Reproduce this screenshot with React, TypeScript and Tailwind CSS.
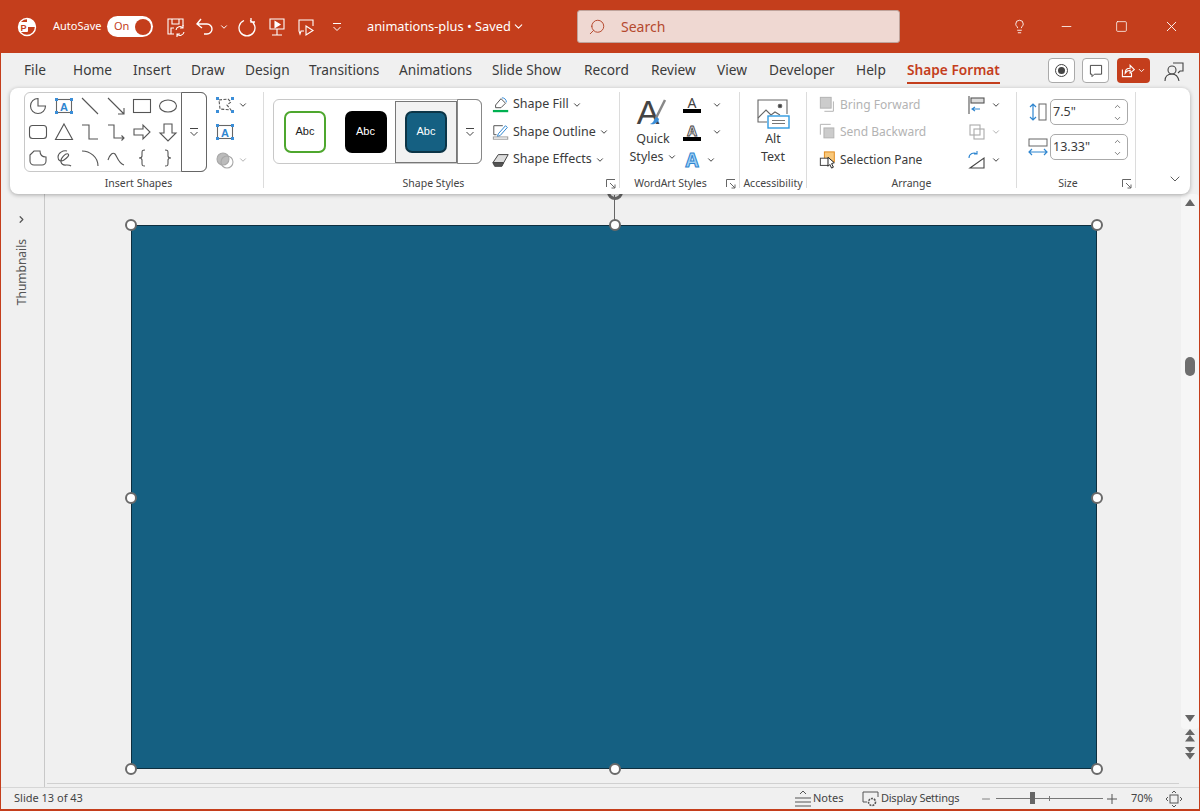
import type { ReactNode } from 'react';
import { ChevronDown, ChevronUp, ChevronRight, Search, Lightbulb, Minus, Square, X } from 'lucide-react';

const Ico = ({ size = 20, children, className = '' }: { size?: number; children: ReactNode; className?: string }) => (
  <svg width={size} height={size} viewBox="0 0 20 20" fill="none" stroke="#555" strokeWidth="1.1" className={`shrink-0 ${className}`}>
    {children}
  </svg>
);

const Chev = ({ className = '' }: { className?: string }) => (
  <ChevronDown size={10} strokeWidth={2.4} className={`shrink-0 text-[#444] ${className}`} />
);

const Handle = ({ className }: { className: string }) => (
  <div className={`absolute h-[12px] w-[12px] rounded-full border-2 border-[#6a6a6a] bg-white ${className}`} />
);

const Launcher = ({ className = '' }: { className?: string }) => (
  <svg width="10" height="10" viewBox="0 0 10 10" fill="none" stroke="#666" className={`absolute -bottom-[1px] ${className}`}>
    <path d="M.5 8V.5H9M4 4l5 5M9 5.5V9H5.5" />
  </svg>
);

const MoreGlyph = () => (
  <svg width="10" height="10" viewBox="0 0 10 10" fill="none" stroke="#444">
    <path d="M1 1.5h8M1.5 5L5 8.5 8.5 5" />
  </svg>
);

const BlueDots = () => (
  <g fill="#3b8ed8" stroke="none">
    <rect x="1" y="2" width="3" height="3" />
    <rect x="16" y="2" width="3" height="3" />
    <rect x="1" y="15" width="3" height="3" />
    <rect x="16" y="15" width="3" height="3" />
  </g>
);

const TextBoxIcon = () => (
  <Ico>
    <rect x="2.5" y="3.5" width="15" height="13" stroke="#666" />
    <BlueDots />
    <text x="10" y="14.5" textAnchor="middle" fontSize="11" fontWeight="700" fill="#2f86d0" stroke="none" fontFamily="Liberation Sans">A</text>
  </Ico>
);

const shapes: ReactNode[] = [
  <path d="M10 2.5a7.5 7.5 0 1 0 7.5 7.5H10z" />,
  <TextBoxIcon />,
  <path d="M2 2l16 16" />,
  <path d="M2 2l16 16M18 12v6h-6" />,
  <rect x="1.5" y="3.5" width="17" height="13" />,
  <ellipse cx="10" cy="10" rx="8.5" ry="6" />,
  <rect x="1.5" y="3.5" width="17" height="13" rx="3" />,
  <path d="M10 2l8.5 15.5h-17z" />,
  <path d="M2 3h7v14h9" />,
  <path d="M2 3h6v13h10M15.5 13.5l2.5 2.5-2.5 2.5" />,
  <path d="M2 7h9V3l7 7-7 7v-4H2z" />,
  <path d="M6 2h8v9h4l-8 8-8-8h4z" />,
  <path d="M2 7l4-4h6c0 4 2 6 6 6v4a4 4 0 0 1-4 4H6a4 4 0 0 1-4-4z" />,
  <path d="M13 3C9 2 4 5 4 9s3 5 6 3 6-5 4-6-8 4-7 8 4 3 6 3 3 0 4 1" />,
  <path d="M2 3c8 0 16 6 16 15" />,
  <path d="M2 12c2-6 5-8 7-6s3 9 9 11" />,
  <path d="M13 2c-3 0-3 1-3 3v3c0 1-1 2-3 2 2 0 3 1 3 2v3c0 2 0 3 3 3" />,
  <path d="M7 2c3 0 3 1 3 3v3c0 1 1 2 3 2-2 0-3 1-3 2v3c0 2 0 3-3 3" />,
];

const tabs = [
  { label: 'File', w: 'w-[49px]' },
  { label: 'Home', w: 'w-[60px]' },
  { label: 'Insert', w: 'w-[58px]' },
  { label: 'Draw', w: 'w-[54px]' },
  { label: 'Design', w: 'w-[64px]' },
  { label: 'Transitions', w: 'w-[90px]' },
  { label: 'Animations', w: 'w-[93px]' },
  { label: 'Slide Show', w: 'w-[92px]' },
  { label: 'Record', w: 'w-[67px]' },
  { label: 'Review', w: 'w-[66px]' },
  { label: 'View', w: 'w-[52px]' },
  { label: 'Developer', w: 'w-[87px]' },
  { label: 'Help', w: 'w-[51px]' },
];

function TitleBar() {
  return (
    <div className="flex h-[53px] shrink-0 items-center text-white">
      <svg width="22" height="22" viewBox="0 0 22 22" className="ml-[15px] shrink-0">
        <circle cx="11" cy="11" r="8.5" fill="none" stroke="#fff" strokeWidth="1.4" />
        <path d="M11 2.5a8.5 8.5 0 0 1 8.5 8.5H11z" fill="#fff" />
        <rect x="3" y="6" width="9" height="10" rx="1" fill="#fff" />
        <text x="7.5" y="14.5" textAnchor="middle" fontSize="9" fontWeight="700" fill="#c43e1c" fontFamily="Liberation Sans">P</text>
      </svg>
      <span className="ml-[15px] w-[54px] text-[11px]">AutoSave</span>
      <div className="flex h-[21px] w-[46px] items-center justify-between rounded-full bg-white pl-[7px] pr-[2px] text-[11px] text-[#c43e1c]">
        <span>On</span>
        <div className="h-[16px] w-[16px] rounded-full bg-[#c43e1c]" />
      </div>
      <svg width="20" height="20" viewBox="0 0 20 20" fill="none" stroke="#fff" strokeWidth="1.1" className="ml-[13px] shrink-0">
        <path d="M8 17H2V2h15v7M6 2v5h7V2M5 17v-6h3" />
        <path d="M10 13a4 4 0 0 1 7-2M18 15a4 4 0 0 1-7 2M17 8v3h-3M11 20v-3h3" />
      </svg>
      <svg width="20" height="20" viewBox="0 0 20 20" fill="none" stroke="#fff" strokeWidth="1.4" className="ml-[9px] shrink-0">
        <path d="M2 7h10a5 5 0 0 1 0 10H9M6 2L2 7l5 4" />
      </svg>
      <ChevronDown size={10} strokeWidth={2.4} className="ml-[4px] shrink-0 text-white" />
      <svg width="20" height="20" viewBox="0 0 20 20" fill="none" stroke="#fff" strokeWidth="1.3" className="ml-[8px] shrink-0">
        <path d="M7 3.5a8 8 0 1 0 6 0M6 1v4H2" transform="matrix(-1 0 0 1 20 0)" />
      </svg>
      <svg width="20" height="20" viewBox="0 0 20 20" fill="none" stroke="#fff" strokeWidth="1.1" className="ml-[10px] shrink-0">
        <path d="M3 2h14v10H3zM10 12v6M5 18h10" />
        <path d="M8 4.5l5 3-5 3z" fill="#fff" />
      </svg>
      <svg width="20" height="20" viewBox="0 0 20 20" fill="none" stroke="#fff" strokeWidth="1.1" className="ml-[9px] shrink-0">
        <path d="M8 14H5l-1 3-1-3V3h14v6" />
        <path d="M10 9l7 4.5-7 4.5z" />
      </svg>
      <svg width="10" height="10" viewBox="0 0 10 10" fill="none" stroke="#fff" className="ml-[16px] shrink-0">
        <path d="M1 1.5h8M1.5 5L5 8.5 8.5 5" />
      </svg>
      <span className="ml-[25px] w-[143px] whitespace-nowrap text-[12.8px]">animations-plus • Saved</span>
      <ChevronDown size={13} className="ml-[2px] shrink-0" />
      <div className="ml-[52px] flex h-[33px] w-[323px] shrink-0 items-center rounded-[3px] border border-[#bfa39b] bg-[#efd8d2] text-[14px] text-[#b5492e]">
        <Search size={18} strokeWidth={1.3} className="ml-[10px] -scale-x-100" />
        <span className="ml-[15px]">Search</span>
      </div>
      <Lightbulb size={15} strokeWidth={1.4} className="ml-[112px]" />
      <Minus size={15} strokeWidth={1.3} className="ml-[32px]" />
      <Square size={13} strokeWidth={1.4} className="ml-[41px]" />
      <X size={17} strokeWidth={1.3} className="ml-[35px]" />
    </div>
  );
}

function Tabs() {
  return (
    <div className="flex h-[35px] shrink-0 items-center pl-[23px] text-[13.7px] text-[#3b3b3b]">
      {tabs.map(t => (
        <span key={t.label} className={`${t.w} whitespace-nowrap`}>{t.label}</span>
      ))}
      <span className="relative whitespace-nowrap font-semibold text-[#c43e1c]">
        Shape Format
        <span className="absolute -bottom-[3px] left-0 right-0 h-[2px] bg-[#c43e1c]" />
      </span>
      <div className="ml-auto mr-[14px] flex items-center gap-[7px]">
        <div className="flex h-[25px] w-[27px] items-center justify-center rounded-[4px] border border-[#aaa] bg-white">
          <div className="flex h-[13px] w-[13px] items-center justify-center rounded-full border border-[#444]">
            <div className="h-[7px] w-[7px] rounded-full bg-[#444]" />
          </div>
        </div>
        <div className="flex h-[25px] w-[27px] items-center justify-center rounded-[4px] border border-[#aaa] bg-white">
          <Ico size={16}><path d="M3 3h14v11H8l-3 3v-3H3z" stroke="#333" /></Ico>
        </div>
        <div className="ml-[1px] flex h-[25px] w-[33px] items-center justify-center gap-[2px] rounded-[4px] bg-[#c43e1c]">
          <svg width="14" height="14" viewBox="0 0 20 20" fill="none" stroke="#fff" strokeWidth="1.6">
            <path d="M2 8v10h13v-5M6 13c0-5 3-7 7-7V2l6 6-6 5V9c-3 0-5 1-7 4z" />
          </svg>
          <ChevronDown size={9} strokeWidth={2.4} className="text-white" />
        </div>
        <svg width="22" height="22" viewBox="0 0 22 22" fill="none" stroke="#444" strokeWidth="1.1" className="ml-[6px]">
          <circle cx="9" cy="10" r="4" />
          <path d="M2 21c0-5 3-7 7-7s6 2 7 7M10 3h10v8h-3l-2 2" />
        </svg>
      </div>
    </div>
  );
}

const Group = ({ w, label, children, launcher, labelPad = '' }: { w: string; label: string; children: ReactNode; launcher?: string; labelPad?: string }) => (
  <div className={`relative mb-[6px] mt-[4px] flex shrink-0 flex-col border-r border-[#dcdcdc] ${w}`}>
    <div className="flex flex-1">{children}</div>
    <div className={`-mb-[4px] h-[16px] whitespace-nowrap text-center text-[10.5px] leading-[14px] text-[#444] ${labelPad}`}>{label}</div>
    {launcher && <Launcher className={launcher} />}
  </div>
);

const CmdRow = ({ icon, label, chev = true, off = false, small = false }: { icon: ReactNode; label: string; chev?: boolean; off?: boolean; small?: boolean }) => (
  <div className={`flex h-[27.5px] items-center whitespace-nowrap ${small ? 'text-[12px]' : 'text-[12.5px]'} ${off ? 'text-[#b3b3b3]' : 'text-[#3b3b3b]'}`}>
    {icon}
    <span className="ml-[3px]">{label}</span>
    {chev && <Chev className="ml-[3px]" />}
  </div>
);

function Ribbon() {
  return (
    <div className="relative z-10 mx-[9px] flex h-[106px] shrink-0 rounded-lg bg-white shadow-[0_1px_4px_rgba(0,0,0,0.3)]">
      <Group w="w-[254px]" label="Insert Shapes" labelPad="pl-[4px]">
        <div className="ml-[14px] flex h-[80px] w-[183px] rounded-[6px] border border-[#c8c8c8]">
          <div className="grid w-[156px] grid-cols-6 content-center justify-items-center gap-y-[6px]">
            {shapes.map((s, i) => (
              <Ico key={i}>{s}</Ico>
            ))}
          </div>
          <div className="-my-px -mr-px flex flex-1 items-center justify-center rounded-r-[6px] border border-[#666]">
            <MoreGlyph />
          </div>
        </div>
        <div className="-mt-[1px] ml-[8px] flex flex-col">
          <div className="flex h-[27.5px] items-center gap-[3px]">
            <Ico><path d="M4 5l9-1 3 3-4 3 4 5-11-1z" strokeDasharray="3 1.5" /><BlueDots /></Ico>
            <Chev />
          </div>
          <div className="flex h-[27.5px] items-center"><TextBoxIcon /></div>
          <div className="flex h-[27.5px] items-center gap-[3px]">
            <Ico><circle cx="8" cy="9" r="6" fill="#bbb" stroke="#a8a8a8" /><circle cx="12" cy="12" r="6" stroke="#a8a8a8" /></Ico>
            <Chev className="opacity-40" />
          </div>
        </div>
      </Group>

      <Group w="w-[356px]" label="Shape Styles" launcher="right-[3px]" labelPad="pr-[16px]">
        <div className="ml-[9px] mt-[7px] flex h-[65px] w-[209px] rounded-[6px] border border-[#c8c8c8]">
          <div className="flex w-[62px] items-center justify-center">
            <div className="flex h-[42px] w-[42px] items-center justify-center rounded-[7px] border-2 border-[#4ea72e] bg-white text-[11px] text-[#222] [font-family:'Liberation_Sans']">Abc</div>
          </div>
          <div className="flex w-[59px] items-center justify-center">
            <div className="flex h-[42px] w-[42px] items-center justify-center rounded-[7px] bg-black text-[11px] text-white [font-family:'Liberation_Sans']">Abc</div>
          </div>
          <div className="flex h-[62px] w-[62px] items-center justify-center self-center border border-[#777] bg-[#f2f2f2]">
            <div className="flex h-[42px] w-[42px] items-center justify-center rounded-[7px] border-2 border-[#0c3547] bg-[#156082] text-[11px] text-white [font-family:'Liberation_Sans']">Abc</div>
          </div>
          <div className="-my-px -mr-px flex flex-1 items-center justify-center rounded-r-[6px] border border-[#888]">
            <MoreGlyph />
          </div>
        </div>
        <div className="-mt-[1px] ml-[10px] flex flex-col">
          <CmdRow label="Shape Fill" icon={
            <Ico size={18}>
              <path d="M4 10l6-7 5 5-5 5H4z" fill="#fff" />
              <path d="M11 2c3 0 5 2 5 5" stroke="#3b8ed8" />
              <rect x="1" y="15.5" width="17" height="2.5" fill="#00b050" stroke="none" />
            </Ico>
          } />
          <CmdRow label="Shape Outline" icon={
            <Ico size={18}>
              <path d="M2 3h10M2 3v10h3" />
              <path d="M7 12l8-9 2 2-8 9-3 1z" stroke="#2f86d0" />
              <rect x="1.5" y="15.5" width="16" height="2.5" stroke="#999" />
            </Ico>
          } />
          <CmdRow label="Shape Effects" icon={
            <Ico size={18}>
              <path d="M1 13l6-9h11l-5 9z" fill="#ddd" stroke="#444" />
              <path d="M1 13l2 4h8l2-4z" fill="#555" stroke="#444" />
            </Ico>
          } />
        </div>
      </Group>

      <Group w="w-[120px]" label="WordArt Styles" launcher="right-[3px]" labelPad="pr-[18px]">
        <div className="ml-[12px] flex w-[42px] flex-col items-center pt-[1px] text-[12.5px] leading-[18px] text-[#3b3b3b]">
          <svg width="36" height="38" viewBox="0 0 36 38" className="shrink-0">
            <text x="13" y="31" textAnchor="middle" fontSize="34" fill="#444" fontFamily="Liberation Sans">A</text>
            <path d="M30 7L21 25" stroke="#888" strokeWidth="2.5" />
            <path d="M22 24c-3 1-3 4-4 5s-3 2-3 2c4 1 8-1 9-5z" fill="#3b8ed8" />
          </svg>
          <span className="-mt-[1px]">Quick</span>
          <span className="flex items-center gap-[3px] whitespace-nowrap">Styles<Chev /></span>
        </div>
        <div className="-mt-[1px] ml-[9px] flex flex-col">
          <div className="flex h-[27.5px] items-center">
            <div className="flex w-[18px] flex-col items-center text-[14px] leading-[13px] text-[#444]">A<div className="h-[4px] w-[18px] bg-black" /></div>
            <Chev className="ml-[11px]" />
          </div>
          <div className="flex h-[27.5px] items-center">
            <div className="flex w-[18px] flex-col items-center text-[14px] font-bold leading-[13px] text-[#ddd] [-webkit-text-stroke:0.8px_#444]">A<div className="h-[4px] w-[18px] bg-black" /></div>
            <Chev className="ml-[11px]" />
          </div>
          <div className="flex h-[27.5px] items-center">
            <span className="w-[18px] text-center text-[19px] font-bold text-[#9fd0f5] [-webkit-text-stroke:1px_#2f86d0]">A</span>
            <Chev className="ml-[5px]" />
          </div>
        </div>
      </Group>

      <Group w="w-[67px]" label="Accessibility">
        <div className="flex w-full flex-col items-center pt-[6px] text-[12.5px] leading-[18px] text-[#3b3b3b]">
          <svg width="34" height="32" viewBox="0 0 34 32" fill="none" stroke="#666" strokeWidth="1.1" className="shrink-0">
            <path d="M11 24H2V2h29v14" />
            <path d="M2 20l8-8 5 5 4-3 5 3" />
            <circle cx="24" cy="8" r="1.8" fill="#444" />
            <rect x="12" y="18" width="21" height="12" fill="#fff" stroke="#2f9ae0" strokeWidth="1.4" />
            <path d="M16 22.5h13M16 25.5h13" stroke="#777" />
          </svg>
          <span>Alt</span>
          <span>Text</span>
        </div>
      </Group>

      <Group w="w-[210px]" label="Arrange">
        <div className="-mt-[1px] ml-[12px] flex w-[148px] flex-col">
          <CmdRow off small label="Bring Forward" chev={false} icon={
            <Ico size={18}><rect x="1.5" y="1.5" width="12" height="12" fill="#ccc" stroke="#b3b3b3" /><path d="M16 6v11H6" stroke="#b3b3b3" /></Ico>
          } />
          <CmdRow off small label="Send Backward" chev={false} icon={
            <Ico size={18}><path d="M1.5 13V1.5H13" stroke="#b3b3b3" /><rect x="5.5" y="5.5" width="11" height="11" fill="#ccc" stroke="#b3b3b3" /></Ico>
          } />
          <CmdRow small label="Selection Pane" chev={false} icon={
            <Ico size={18}>
              <rect x="6" y="1" width="11" height="11" fill="#f9c87a" stroke="#e08a1e" />
              <rect x="1.5" y="8" width="9" height="8" fill="#fff" stroke="#444" />
              <path d="M10 7l7 6-3 1 2 4-2 1-2-4-2 2z" fill="#fff" stroke="#222" />
            </Ico>
          } />
        </div>
        <div className="-mt-[1px] flex flex-col">
          <div className="flex h-[27.5px] items-center gap-[4px]">
            <Ico><path d="M2 1v18" /><rect x="4" y="3" width="13" height="5" fill="#ddd" /><rect x="4" y="9" width="10" height="2" stroke="none" /><path d="M13 14H5M8 12l-3 2 3 2" stroke="#2f86d0" /></Ico>
            <Chev />
          </div>
          <div className="flex h-[27.5px] items-center gap-[4px]">
            <Ico><rect x="3" y="3" width="10" height="10" stroke="#aaa" /><rect x="7" y="7" width="10" height="10" stroke="#aaa" /></Ico>
            <Chev className="opacity-40" />
          </div>
          <div className="flex h-[27.5px] items-center gap-[4px]">
            <Ico><path d="M3 18L17 8v10z" stroke="#444" /><path d="M2 8a5 5 0 0 1 8-4M10 1v3H7" stroke="#2f86d0" /></Ico>
            <Chev />
          </div>
        </div>
      </Group>

      <Group w="w-[119px]" label="Size" launcher="right-[3px]" labelPad="pr-[16px]">
        <div className="ml-[10px] flex flex-col gap-[9px] pt-[7px]">
          {[{ v: '7.5"', vert: true }, { v: '13.33"', vert: false }].map(f => (
            <div key={f.v} className="flex items-center">
              <svg width="22" height="22" viewBox="0 0 22 22" fill="none" className="shrink-0">
                {f.vert ? (
                  <>
                    <rect x="12" y="3" width="7" height="16" stroke="#666" />
                    <path d="M6 3v16M3 6l3-3 3 3M3 16l3 3 3-3" stroke="#2f86d0" strokeWidth="1.2" />
                  </>
                ) : (
                  <>
                    <rect x="2" y="3" width="18" height="7" stroke="#666" />
                    <path d="M2 16h18M5 13l-3 3 3 3M17 13l3 3-3 3" stroke="#2f86d0" strokeWidth="1.2" />
                  </>
                )}
              </svg>
              <div className="ml-[1px] flex h-[26px] w-[78px] items-center justify-between rounded-[5px] border border-[#aaa] pl-[2px] pr-[5px] text-[12.5px] text-[#3b3b3b]">
                <span>{f.v}</span>
                <div className="flex flex-col gap-[3px]">
                  <ChevronUp size={9} strokeWidth={1.8} className="text-[#444]" />
                  <ChevronDown size={9} strokeWidth={1.8} className="text-[#444]" />
                </div>
              </div>
            </div>
          ))}
        </div>
      </Group>

      <ChevronDown size={16} strokeWidth={1.3} className="absolute bottom-[7px] right-[7px] text-[#444]" />
    </div>
  );
}

function Workarea() {
  return (
    <div className="flex min-h-0 flex-1">
      <div className="flex w-[44px] shrink-0 flex-col items-center border-r border-[#c8c8c8] pt-[20px] text-[#555]">
        <ChevronRight size={11} strokeWidth={2.6} className="-ml-[2px]" />
        <span className="-ml-[2px] mt-[14px] rotate-180 text-[12px] [writing-mode:vertical-rl]">Thumbnails</span>
      </div>
      <div className="flex min-w-0 flex-1 flex-col">
        <div className="flex-1 pl-[86px] pt-[31px]">
          <div className="relative h-[544px] w-[966px] border-[1.5px] border-[#0e2f3f] bg-[#156082]">
            <div className="absolute -top-[31px] left-[482px] h-[30px] w-px bg-[#666]" />
            <div className="absolute -top-[42px] left-[475px] h-[16px] w-[16px] rounded-full border-[3px] border-[#666]" />
            <Handle className="-left-[7px] -top-[7px]" />
            <Handle className="-top-[7px] left-[476.5px]" />
            <Handle className="-right-[7px] -top-[7px]" />
            <Handle className="-left-[7px] top-[265.5px]" />
            <Handle className="-right-[7px] top-[265.5px]" />
            <Handle className="-bottom-[7px] -left-[7px]" />
            <Handle className="-bottom-[7px] left-[476.5px]" />
            <Handle className="-bottom-[7px] -right-[7px]" />
          </div>
        </div>
        <div className="mb-[3px] ml-[2px] h-px bg-[#d0d0d0]" />
      </div>
      <div className="flex w-[20px] shrink-0 flex-col items-center pl-[2px] text-[#666]">
        <div className="flex h-[535px] w-full flex-col items-center rounded bg-[#f6f6f6] pt-[5px]">
          <svg width="10" height="7" viewBox="0 0 10 7" fill="#666"><path d="M5 0l5 7H0z" /></svg>
          <div className="mt-[151px] h-[19px] w-[10px] rounded-full bg-[#6e6e6e]" />
          <svg width="10" height="7" viewBox="0 0 10 7" fill="#666" className="mb-[7px] mt-auto"><path d="M0 0h10L5 7z" /></svg>
        </div>
        <svg width="12" height="14" viewBox="0 0 12 14" fill="#666"><path d="M6 0l5 6H1zM6 6l5 6.5H1z" /></svg>
        <svg width="12" height="14" viewBox="0 0 12 14" fill="#666" className="mt-[3px]"><path d="M1 1h10L6 7zM1 7h10l-5 6.5z" /></svg>
      </div>
    </div>
  );
}

function StatusBar() {
  return (
    <div className="flex h-[22px] shrink-0 items-center border-t border-[#d6d6d6] text-[11px] text-[#444]">
      <span className="ml-[13px] w-[780px] whitespace-nowrap">Slide 13 of 43</span>
      <svg width="18" height="18" viewBox="0 0 18 18" fill="none" stroke="#555" className="shrink-0">
        <path d="M6 4l3-3 3 3M1 8h16M1 12h16M1 16h16" />
      </svg>
      <span className="ml-[1px] w-[49px]">Notes</span>
      <svg width="18" height="18" viewBox="0 0 18 18" fill="none" stroke="#555" className="shrink-0">
        <path d="M5 12H1V2h15v5" />
        <circle cx="10" cy="12" r="3.5" strokeDasharray="2 1" strokeWidth="1.6" />
      </svg>
      <span className="ml-[1px] w-[99px] whitespace-nowrap tracking-[-0.25px]">Display Settings</span>
      <Minus size={12} strokeWidth={1.3} className="shrink-0" />
      <div className="relative ml-[4px] h-px w-[107px] shrink-0 bg-[#777]">
        <div className="absolute -top-[6px] left-[34px] h-[12px] w-[5px] bg-[#666]" />
        <div className="absolute -top-[2px] left-[53px] h-[5px] w-px bg-[#777]" />
      </div>
      <svg width="12" height="12" viewBox="0 0 12 12" stroke="#555" className="ml-[3px] shrink-0"><path d="M6 1v10M1 6h10" /></svg>
      <span className="ml-[13px] w-[33px]">70%</span>
      <svg width="18" height="18" viewBox="0 0 18 18" fill="none" stroke="#555" className="ml-[1px] shrink-0">
        <rect x="5" y="5" width="8" height="8" />
        <path d="M7 3l2-2 2 2M7 15l2 2 2-2M3 7L1 9l2 2M15 7l2 2-2 2" />
      </svg>
    </div>
  );
}

export default function App() {
  return (
    <div className="flex h-[811px] w-[1200px] flex-col overflow-hidden bg-[#c43e1c] px-px pb-[2px] font-['Noto_Sans',sans-serif]">
      <TitleBar />
      <div className="flex min-h-0 flex-1 flex-col bg-[#f0f0f0]">
        <Tabs />
        <Ribbon />
        <Workarea />
        <StatusBar />
      </div>
    </div>
  );
}
